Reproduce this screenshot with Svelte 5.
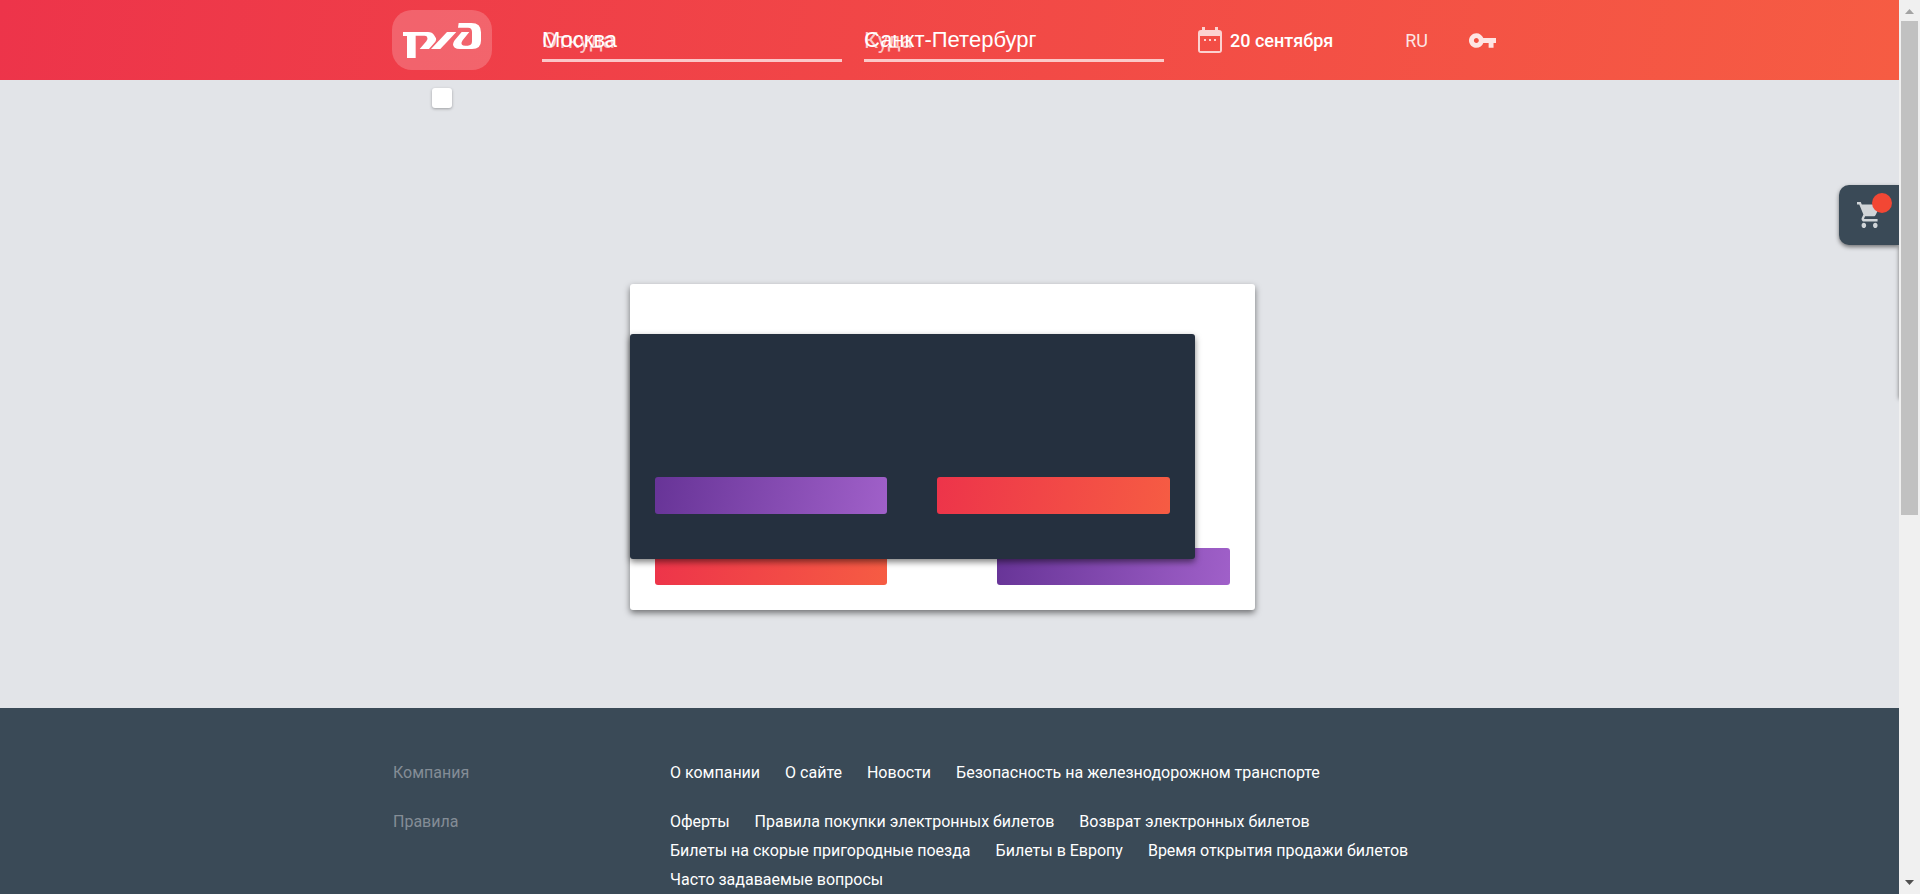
<script>
  const company = ['О компании', 'О сайте', 'Новости', 'Безопасность на железнодорожном транспорте'];
  const rules = [
    'Оферты',
    'Правила покупки электронных билетов',
    'Возврат электронных билетов',
    'Билеты на скорые пригородные поезда',
    'Билеты в Европу',
    'Время открытия продажи билетов',
    'Часто задаваемые вопросы'
  ];
  const groups = [
    { title: 'Компания', links: company },
    { title: 'Правила', links: rules }
  ];
  let from = $state('Москва');
  let to = $state('Санкт-Петербург');
</script>

<div class="shell">
  <div class="page">
    <header>
      <div class="wrap bar">
        <a class="logo" href="#home" aria-label="РЖД">
          <svg viewBox="0 0 300 180" width="100" height="60" fill="#fff" aria-hidden="true">
            <path d="M33 66H108Q121 66 126 75L132 85Q134 89 130 95L111 117H83L103 94Q109 86 105 80Q103 77 97 77H71V144H45V78H33Z" />
            <path d="M165 66H193L145 117H117Z" />
            <path fill-rule="evenodd" d="M200 39H238Q267 39 267 67V92Q267 117 240 117H204Q183 117 183 103Q183 98 188 91L209 66H232L212 91Q206 100 210 104Q212 107 220 107H227Q240 107 240 94V66Q240 53 228 53H198Z" />
          </svg>
        </a>
        <div class="field first">
          <label for="from">Откуда</label>
          <input id="from" type="text" bind:value={from} />
        </div>
        <div class="field">
          <label for="to">Куда</label>
          <input id="to" type="text" bind:value={to} />
        </div>
        <button class="date" type="button">
          <svg viewBox="0 0 24 26" width="24" height="26" fill="#fff" fill-opacity=".75" fill-rule="evenodd" aria-hidden="true">
            <path d="M4 0h3v3h10V0h3v3h1a3 3 0 0 1 3 3v17a3 3 0 0 1-3 3H3a3 3 0 0 1-3-3V6a3 3 0 0 1 3-3h1zM2 9v15h20V9z" />
            <path d="M6 12h2v2H6zM11 12h2v2h-2zM16 12h2v2h-2z" />
          </svg>
          <span>20 сентября</span>
        </button>
        <button class="lang" type="button">RU</button>
        <a class="key" href="#login" aria-label="Вход">
          <svg viewBox="1 6 22 12" width="27" height="15" fill="#fff" fill-opacity=".85" aria-hidden="true">
            <path d="M12.650 10C11.830 7.670 9.610 6 7 6c-3.310 0-6 2.690-6 6s2.690 6 6 6c2.610 0 4.830-1.670 5.650-4H17v4h4v-4h2v-4H12.650zM7 14c-1.100 0-2-.9-2-2s.9-2 2-2 2 .9 2 2-.9 2-2 2z" />
          </svg>
        </a>
      </div>
    </header>

    <main>
      <div class="wrap hint"><span></span></div>
      <section class="dialog">
        <button class="btn red" type="button" aria-label="Да"></button>
        <button class="btn purple" type="button" aria-label="Нет"></button>
        <div class="dialog-top">
          <button class="btn purple" type="button" aria-label="Отмена"></button>
          <button class="btn red" type="button" aria-label="Продолжить"></button>
        </div>
      </section>
      <aside class="drawer">
        <button class="cart" type="button" aria-label="Корзина">
          <svg viewBox="1 2 21 20" width="24" height="26" preserveAspectRatio="none" fill="#d0d5d8" aria-hidden="true">
            <path d="M7 18c-1.100 0-1.990.9-1.990 2S5.900 22 7 22s2-.9 2-2-.9-2-2-2zM1 2v2h2l3.600 7.590-1.350 2.450c-.16.280-.25.610-.25.960 0 1.100.9 2 2 2h12v-2H7.420c-.14 0-.25-.11-.25-.25l.030-.12.900-1.630h7.450c.75 0 1.410-.41 1.750-1.030l3.580-6.490A1 1 0 0 0 20 4H5.210l-.94-2H1zm16 16c-1.100 0-1.990.9-1.990 2s.89 2 1.990 2 2-.9 2-2-.9-2-2-2z" />
          </svg>
          <i></i>
        </button>
        <div class="drawer-edge"></div>
      </aside>
    </main>

    <footer>
      <div class="wrap">
        {#each groups as group}
          <div class="group">
            <h2>{group.title}</h2>
            <nav aria-label={group.title}>
              {#each group.links as link}
                <a href="#info">{link}</a>
              {/each}
            </nav>
          </div>
        {/each}
      </div>
    </footer>
  </div>

  <div class="scroll" aria-hidden="true">
    <svg viewBox="0 0 9 5" width="9" height="5"><path d="M0 5 4.500 0 9 5z" fill="#a3a3a3" /></svg>
    <div class="track"><div class="thumb"></div></div>
    <svg viewBox="0 0 9 5" width="9" height="5"><path d="M0 0h9L4.500 5z" fill="#505050" /></svg>
  </div>
</div>

<style>
  :global(body) { margin: 0; }
  .shell {
    display: grid;
    grid-template-columns: minmax(0, 1fr) 21px;
    height: 100vh;
    overflow: hidden;
    font-family: Roboto, sans-serif;
    font-size: 16px;
  }
  .shell * { box-sizing: border-box; }
  button { border: 0; padding: 0; background: none; font: inherit; color: inherit; cursor: pointer; }
  a { color: inherit; text-decoration: none; }
  svg { display: block; }
  .page { display: flex; flex-direction: column; min-height: 0; overflow: hidden; background: #e2e4e8; }
  .wrap { width: 100%; max-width: 1115px; margin: 0 auto; }

  header { flex: none; background: linear-gradient(100deg, #ed344a, #f65c43); color: #fff; }
  .bar { display: flex; align-items: center; height: 80px; }
  .logo { width: 100px; height: 60px; border-radius: 20px; background: rgba(255, 255, 255, .2); }
  .field { position: relative; width: 300px; margin-right: 34px; }
  .field.first { margin: 0 22px 0 50px; }
  .field label {
    position: absolute;
    left: 0;
    top: 0;
    line-height: 46px;
    font-size: 22px;
    color: rgba(255, 255, 255, .7);
  }
  .field input {
    position: relative;
    display: block;
    width: 100%;
    height: 44px;
    padding: 2px 0 0;
    border: 0;
    border-bottom: 3px solid rgba(255, 255, 255, .7);
    background: none;
    outline: 0;
    color: #fff;
    font-family: "Liberation Sans", Arial, sans-serif;
    font-size: 22px;
  }
  .date { display: flex; align-items: center; gap: 8px; font-size: 18px; font-weight: 500; }
  .lang { margin-left: 72px; font-size: 18px; opacity: .85; }
  .key { margin-left: 41px; }

  main { position: relative; flex: 1; display: flex; flex-direction: column; }
  .hint { padding: 8px 40px; }
  .hint span {
    display: block;
    width: 20px;
    height: 20px;
    border-radius: 3px;
    background: #fff;
    box-shadow: 0 1px 3px rgba(0, 0, 0, .3);
  }
  .dialog {
    position: absolute;
    left: calc(50% - 320px);
    bottom: 98px;
    display: flex;
    gap: 110px;
    align-items: flex-end;
    width: 625px;
    height: 326px;
    padding: 25px;
    border-radius: 3px;
    background: #fff;
    box-shadow: 0 3px 6px rgba(0, 0, 0, .5);
  }
  .dialog-top {
    position: absolute;
    left: 0;
    top: 50px;
    display: flex;
    gap: 50px;
    align-items: flex-end;
    width: 565px;
    height: 225px;
    padding: 25px 25px 45px;
    border-radius: 3px;
    background: #25303f;
    box-shadow: 0 3px 6px rgba(0, 0, 0, .5);
  }
  .btn { flex: 1; height: 37px; border-radius: 3px; }
  .red { background: linear-gradient(100deg, #ed344a, #f65c43); }
  .purple { background: linear-gradient(100deg, #673497, #a060c9); }

  .drawer { position: absolute; right: 0; top: 105px; width: 60px; }
  .cart {
    position: relative;
    z-index: 1;
    display: block;
    width: 60px;
    height: 60px;
    padding: 0 0 0 18px;
    border-radius: 10px 0 0 10px;
    background: #3a4a57;
    box-shadow: 0 2px 4px rgba(0, 0, 0, .5);
  }
  .cart i {
    position: absolute;
    right: 7px;
    top: 8px;
    width: 20px;
    height: 20px;
    border-radius: 50%;
    background: #f24734;
  }
  .drawer-edge { width: 60px; height: 154px; margin-left: 60px; box-shadow: 0 0 4px rgba(0, 0, 0, .5); }

  footer { flex: none; padding: 50px 0 0; background: #3a4a57; color: #fff; }
  .group { display: flex; margin-bottom: 20px; line-height: 29px; }
  .group:last-child { margin-bottom: 0; }
  h2 { flex: none; width: 278px; margin: 0; padding-left: 1px; font-size: 16px; font-weight: 400; color: #848d96; }
  nav { display: flex; flex-wrap: wrap; column-gap: 25px; max-width: 780px; }

  .scroll {
    display: flex;
    flex-direction: column;
    align-items: center;
    gap: 7px;
    padding: 9px 0;
    background: #f0f0f0;
  }
  .track { flex: 1; width: 17px; }
  .thumb { height: 58%; background: #c1c1c1; }
</style>
